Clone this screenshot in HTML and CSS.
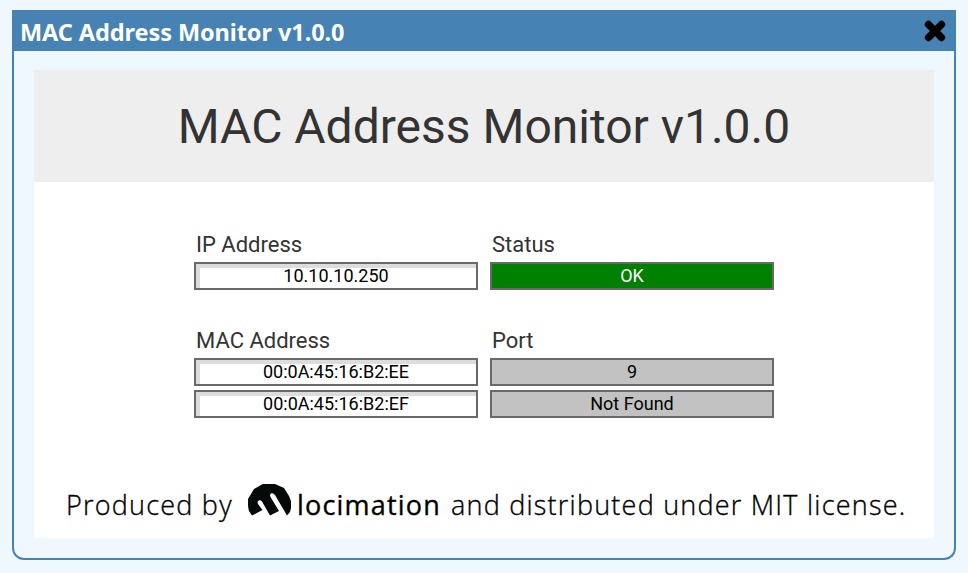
FILE: index.html
```
<!DOCTYPE html>
<html lang="en">
<head>
<meta charset="utf-8">
<title>MAC Address Monitor v1.0.0</title>
<link rel="stylesheet" href="styles.css">
</head>
<body>
<section class="window">
  <header class="titlebar">
    <span class="titlebar-text">MAC Address Monitor v1.0.0</span>
    <svg class="close" viewBox="0 0 22 22" width="22" height="22"><path d="M4.5 4.5L17.5 17.5M17.5 4.5L4.5 17.5" stroke="#000" stroke-width="7.4" stroke-linecap="round"/></svg>
  </header>
  <main class="content">
    <h1 class="banner">MAC Address Monitor v1.0.0</h1>
    <div class="fields">
      <div class="group">
        <div class="label">IP Address</div>
        <div class="box input">10.10.10.250</div>
      </div>
      <div class="group">
        <div class="label">Status</div>
        <div class="box ok">OK</div>
      </div>
      <div class="group">
        <div class="label">MAC Address</div>
        <div class="box input">00:0A:45:16:B2:EE</div>
        <div class="box input">00:0A:45:16:B2:EF</div>
      </div>
      <div class="group">
        <div class="label">Port</div>
        <div class="box">9</div>
        <div class="box">Not Found</div>
      </div>
    </div>
    <footer class="credit">
      <span class="produced">Produced by</span>
      <svg class="logo" viewBox="0 0 43 32" width="43" height="32"><path fill="#05090a" d="M4 31.500L1 27Q0 24 0 20V15L3 10L6 5L13 1L15 0H27L36 4L41 12L43 17V24L42 28L39 31.500L27 11Q25 8.500 23 9.500Q21.500 10.500 22.500 13L31 27L22 31.500L14 17.500Q12 15.500 10 17Q9.300 18 10 20L14.500 26Z"/></svg>
      <span class="brand">locimation</span>
      <span class="license">and distributed under MIT license.</span>
    </footer>
  </main>
</section>
</body>
</html>
```
FILE: styles.css
```
* { box-sizing: border-box; }
body {
  margin: 0;
  padding: 10px 12px 13px;
  height: 573px;
  background: #f0f8ff;
  font-family: Roboto, sans-serif;
  overflow: hidden;
}
.window {
  width: 944px;
  height: 550px;
  border: 2px solid #4682b4;
  border-top: 0;
  border-radius: 0 0 12px 12px;
}
.titlebar {
  height: 41px;
  display: flex;
  align-items: center;
  justify-content: space-between;
  padding: 0 8px 0 6px;
  background: #4682b4;
  color: #fff;
  font: bold 23.5px/34px "Noto Sans", sans-serif;
  white-space: nowrap;
}
.titlebar-text { padding-top: 2px; letter-spacing: -0.08px; }
.close { display: block; }
.content {
  width: 900px;
  height: 468px;
  margin: 19px 20px 0;
  background: #fff;
  display: flex;
  flex-direction: column;
}
.banner {
  margin: 0;
  height: 112px;
  background: #eee;
  color: #333;
  font-size: 48px;
  font-weight: 400;
  line-height: 114px;
  text-align: center;
}
.fields {
  display: grid;
  grid-template-columns: 284px 284px;
  gap: 36px 12px;
  margin: 48px 0 0 160px;
}
.group { display: flex; flex-direction: column; }
.label {
  height: 32px;
  padding-left: 2px;
  color: #333;
  font-size: 22px;
  line-height: 29px;
}
.box {
  height: 28px;
  border: 2px solid #696969;
  background: #c2c2c2;
  color: #000;
  font-size: 18px;
  line-height: 24px;
  text-align: center;
}
.box + .box { margin-top: 4px; }
.input { background: #fff; box-shadow: inset 4px 4px #ddd; }
.ok { background: #008000; color: #fff; }
.credit {
  display: flex;
  height: 40px;
  margin: 66px 0 0 32px;
  color: #000;
  font: 300 27px/42px "Open Sans", sans-serif;
  -webkit-text-stroke: 0.35px #000;
  white-space: nowrap;
}
.produced { width: 182px; letter-spacing: 1.22px; }
.logo { flex: none; -webkit-text-stroke: 0; }
.brand { width: 154px; padding-left: 6px; font-weight: 500; letter-spacing: 1.2px; }
.license { padding-left: 6px; letter-spacing: 1.22px; }
```
